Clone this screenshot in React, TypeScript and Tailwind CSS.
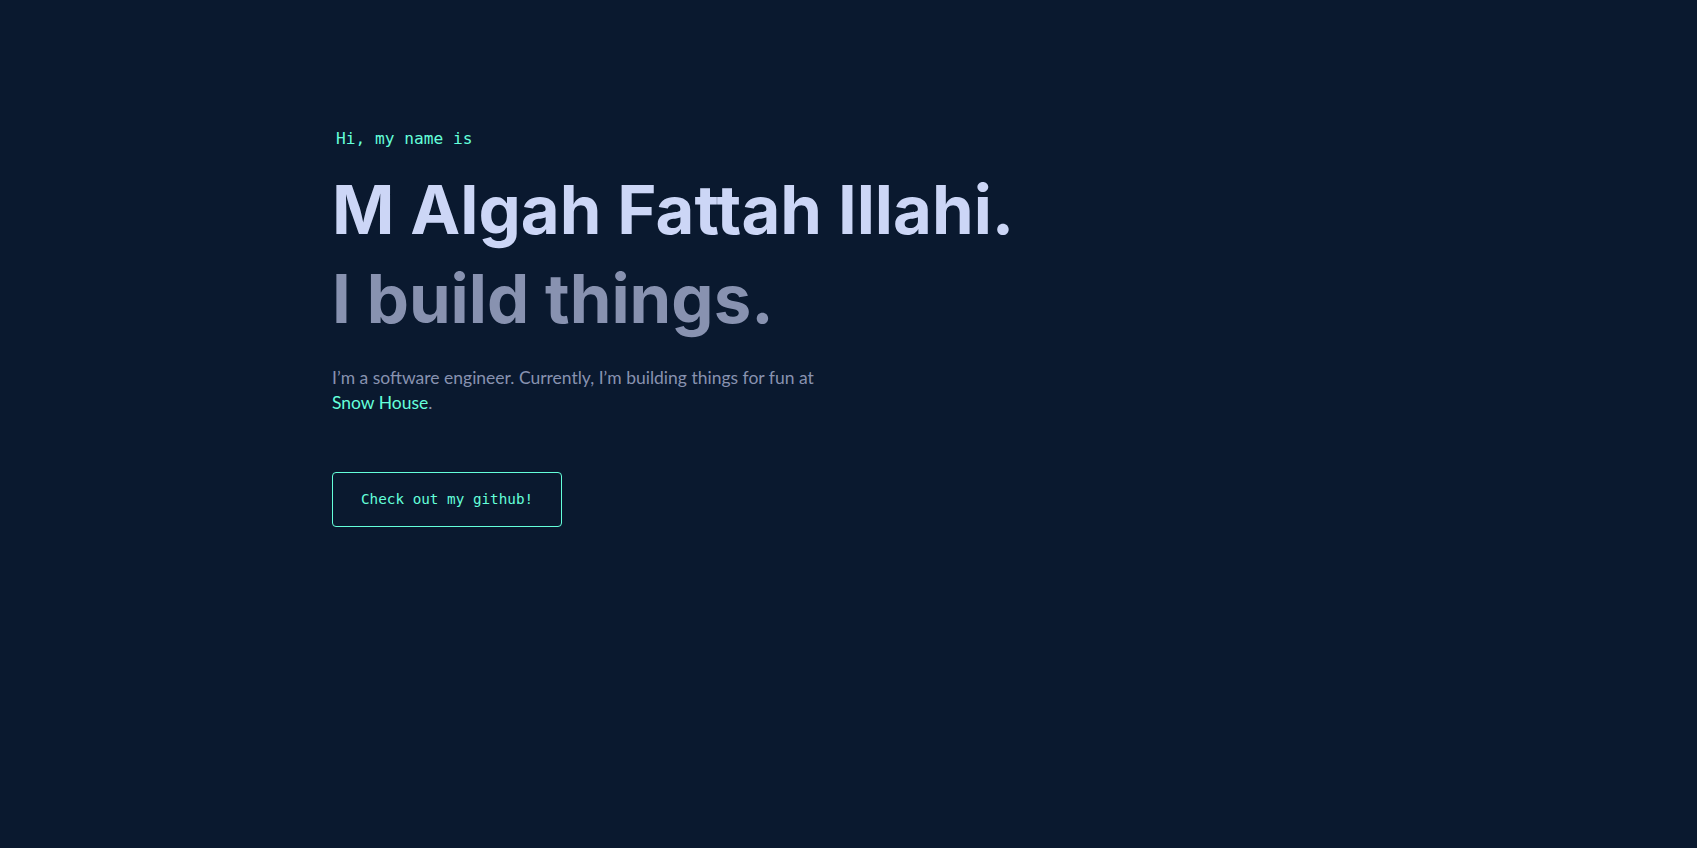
export default function App() {
  return (
    <main className="min-h-screen bg-[#0a192f]">
      <section className="flex flex-col items-start pl-[332px] pt-[129px]">
        {/* Intro */}
        <h1 className="ml-1 text-[16.2px] leading-5 text-[#64ffda] font-['DejaVu_Sans_Mono',monospace]">
          Hi, my name is
        </h1>
        <h2 className="mt-4 text-[67px] leading-[89px] font-bold text-[#ccd6f6] font-['Inter',sans-serif]">
          M Algah Fattah Illahi.
        </h2>
        <h3 className="text-[67px] leading-[89px] font-bold text-[#8892b0] font-['Inter',sans-serif]">
          I build things.
        </h3>
        <p className="mt-[22px] max-w-[500px] text-[17.5px] leading-[25px] text-[#8892b0] font-['Lato',sans-serif]">
          I’m a software engineer. Currently, I’m building things for fun at{" "}
          <a href="#" className="text-[#64ffda]">
            Snow House
          </a>
          .
        </p>

        {/* CTA */}
        <a
          href="#"
          className="mt-[57px] flex h-[55px] w-[230px] items-center whitespace-nowrap rounded border border-[#64ffda] px-7 text-[14.3px] leading-none text-[#64ffda] font-['DejaVu_Sans_Mono',monospace]"
        >
          Check out my github!
        </a>
      </section>
    </main>
  );
}
